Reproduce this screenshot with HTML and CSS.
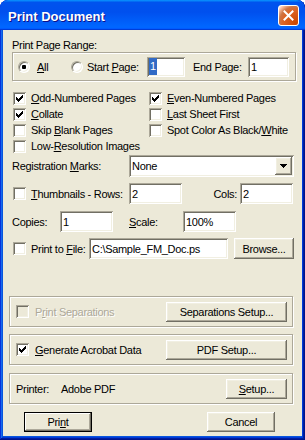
FILE: index.html
```html
<!DOCTYPE html>
<html>
<head>
<meta charset="utf-8">
<title>Print Document</title>
<link rel="stylesheet" href="styles.css">
</head>
<body>
<div class="window">
  <div class="titlebar">
    <span class="title">Print Document</span>
    <span class="close"><svg width="11" height="11" viewBox="0 0 11 11"><path d="M1.5 1.5 L9.5 9.5 M9.5 1.5 L1.5 9.5" stroke="#fff" stroke-width="2" stroke-linecap="square"/></svg></span>
  </div>
  <div class="client">
    <div class="caption">Print Page Range:</div>
    <div class="group range">
      <span class="radio on"><span class="dot"></span></span>
      <span class="lbl l-all"><u>A</u>ll</span>
      <span class="radio"></span>
      <span class="lbl l-start">Start <u>P</u>age:</span>
      <span class="field f-start"><span class="sel">1</span></span>
      <span class="lbl l-end">End Page:</span>
      <span class="field f-end">1</span>
    </div>

    <div class="checks">
      <div class="cell"><span class="cb"><svg class="tick" width="7" height="7" viewBox="0 0 7 7" shape-rendering="crispEdges"><rect x="0" y="2" width="1" height="3"/><rect x="1" y="3" width="1" height="3"/><rect x="2" y="4" width="1" height="3"/><rect x="3" y="3" width="1" height="3"/><rect x="4" y="2" width="1" height="3"/><rect x="5" y="1" width="1" height="3"/><rect x="6" y="0" width="1" height="3"/></svg></span><span class="lbl"><u>O</u>dd-Numbered Pages</span></div>
      <div class="cell"><span class="cb"><svg class="tick" width="7" height="7" viewBox="0 0 7 7" shape-rendering="crispEdges"><rect x="0" y="2" width="1" height="3"/><rect x="1" y="3" width="1" height="3"/><rect x="2" y="4" width="1" height="3"/><rect x="3" y="3" width="1" height="3"/><rect x="4" y="2" width="1" height="3"/><rect x="5" y="1" width="1" height="3"/><rect x="6" y="0" width="1" height="3"/></svg></span><span class="lbl"><u>E</u>ven-Numbered Pages</span></div>
      <div class="cell"><span class="cb"><svg class="tick" width="7" height="7" viewBox="0 0 7 7" shape-rendering="crispEdges"><rect x="0" y="2" width="1" height="3"/><rect x="1" y="3" width="1" height="3"/><rect x="2" y="4" width="1" height="3"/><rect x="3" y="3" width="1" height="3"/><rect x="4" y="2" width="1" height="3"/><rect x="5" y="1" width="1" height="3"/><rect x="6" y="0" width="1" height="3"/></svg></span><span class="lbl"><u>C</u>ollate</span></div>
      <div class="cell"><span class="cb"></span><span class="lbl"><u>L</u>ast Sheet First</span></div>
      <div class="cell"><span class="cb"></span><span class="lbl">Skip <u>B</u>lank Pages</span></div>
      <div class="cell"><span class="cb"></span><span class="lbl">Spot Color As Black/<u>W</u>hite</span></div>
      <div class="cell"><span class="cb"></span><span class="lbl">Low-<u>R</u>esolution Images</span></div>
    </div>

    <div class="row reg">
      <span class="lbl l-reg">Registration <u>M</u>arks:</span>
      <span class="combo"><span class="combo-text">None</span><span class="combo-btn"><svg width="7" height="4" viewBox="0 0 7 4" shape-rendering="crispEdges"><path d="M0 0 H7 L3.5 4 Z" fill="#000"/></svg></span></span>
    </div>

    <div class="row thumbs">
      <span class="cb"></span>
      <span class="lbl l-thumb"><u>T</u>humbnails - Rows:</span>
      <span class="field f-53">2</span>
      <span class="lbl l-cols">Cols:</span>
      <span class="field f-53">2</span>
    </div>

    <div class="row copies">
      <span class="lbl l-copies">Copies:</span>
      <span class="field f-53">1</span>
      <span class="lbl l-scale"><u>S</u>cale:</span>
      <span class="field f-53">100%</span>
    </div>

    <div class="row file">
      <span class="cb"></span>
      <span class="lbl l-file">Print to <u>F</u>ile:</span>
      <span class="field f-file">C:\Sample_FM_Doc.ps</span>
      <span class="btn b-browse">Browse...</span>
    </div>

    <div class="group lower sep">
      <span class="cb disabled"></span>
      <span class="lbl gray">P<u>r</u>int Separations</span>
      <span class="btn b-wide">Separations Setup...</span>
    </div>

    <div class="group lower gen">
      <span class="cb"><svg class="tick" width="7" height="7" viewBox="0 0 7 7" shape-rendering="crispEdges"><rect x="0" y="2" width="1" height="3"/><rect x="1" y="3" width="1" height="3"/><rect x="2" y="4" width="1" height="3"/><rect x="3" y="3" width="1" height="3"/><rect x="4" y="2" width="1" height="3"/><rect x="5" y="1" width="1" height="3"/><rect x="6" y="0" width="1" height="3"/></svg></span>
      <span class="lbl"><u>G</u>enerate Acrobat Data</span>
      <span class="btn b-wide">PDF Setup...</span>
    </div>

    <div class="group lower printer">
      <span class="lbl l-printer">Printer:</span>
      <span class="lbl">Adobe PDF</span>
      <span class="btn b-setup"><span><u>S</u>etup...</span></span>
    </div>

    <div class="actions">
      <span class="btn default b-act">Pri<u>n</u>t</span>
      <span class="btn b-act b-cancel">Cancel</span>
    </div>
  </div>
</div>
</body>
</html>
```

FILE: styles.css
```css
* { box-sizing: border-box; }

html, body {
  margin: 0;
  padding: 0;
  background: #ffffff;
}

body {
  font-family: "Liberation Sans", Arial, sans-serif;
  font-size: 11px;
  letter-spacing: -0.3px;
  color: #000;
}

u { text-decoration: underline; text-underline-offset: 1px; }

.window {
  width: 305px;
  height: 440px;
  display: flex;
  flex-direction: column;
  background: #0855dd;
  border-radius: 8px 8px 0 0;
  overflow: hidden;
  box-shadow: inset -1px -1px #00138c, inset 1px 1px #0831d9, inset -2px -2px #001ea0, inset 2px 2px #166aee, inset -3px -3px #003bda, inset 3px 3px #0855dd;
}

.titlebar {
  height: 30px;
  flex: none;
  display: flex;
  align-items: center;
  justify-content: space-between;
  padding: 0 6px 0 8px;
  background: linear-gradient(180deg, #0997ff, #0053ee 8%, #0050ee 40%, #0066ff 88%, #0066ff 93%, #005bff 95%, #003dd7 96%, #003dd7);
  border-radius: 8px 8px 0 0;
}

.title {
  color: #fff;
  font-weight: bold;
  font-size: 13px;
  letter-spacing: 0;
  margin-top: 2px;
  text-shadow: 1px 1px #0f1089;
}

.close {
  width: 21px;
  height: 21px;
  border: 1px solid #fff;
  border-radius: 3px;
  display: flex;
  align-items: center;
  justify-content: center;
  background: radial-gradient(circle at 90% 90%, #cc4600 0%, #dc6527 55%, #cd7546 70%, #ffccb2 90%, #fff 100%);
}

.client {
  flex: 1;
  margin: 0 3px 4px 3px;
  background: #ece9d8;
  display: flex;
  flex-direction: column;
}

.lbl {
  white-space: nowrap;
  flex: none;
  line-height: 16px;
}

.caption {
  margin: 9px 0 0 9px;
  height: 13px;
  line-height: 13px;
}

/* etched group */
.group {
  flex: none;
  display: flex;
  align-items: center;
  border: 1px solid #aca899;
  box-shadow: inset 1px 1px #fff, 1px 1px #fff;
}

.range {
  margin-left: 9px;
  width: 284px;
  height: 29px;
}

/* radio */
.radio {
  flex: none;
  width: 12px;
  height: 12px;
  border-radius: 50%;
  background: #fff;
  border: 1px solid;
  border-color: #aca899 #fff #fff #aca899;
  box-shadow: inset 1px 1px #716f64, inset -1px -1px #f1efe2;
  display: flex;
  align-items: center;
  justify-content: center;
}
.radio .dot { width: 4px; height: 4px; background: #000; border-radius: 1px; }
.range .radio:first-child { margin-left: 5px; }

.l-all { margin-left: 7px; width: 34px; }
.l-start { margin-left: 4px; width: 60px; }
.l-end { margin-left: 8px; width: 55px; }

/* edit field */
.field {
  flex: none;
  height: 20px;
  background: #fff;
  box-shadow: inset 1px 1px #aca899, inset -1px -1px #fff, inset 2px 2px #716f64, inset -2px -2px #f1efe2;
  padding: 0 3px;
  display: flex;
  align-items: center;
  white-space: nowrap;
  line-height: 16px;
}
.f-start { width: 38px; padding-left: 2px; }
.f-end { width: 41px; }
.f-53 { width: 53px; }
.f-file { width: 139px; }
.sel { background: #316ac5; color: #fff; padding: 0 1px; line-height: 17px; }

/* checkbox */
.cb {
  flex: none;
  width: 13px;
  height: 13px;
  background: #fff;
  box-shadow: inset 1px 1px #aca899, inset -1px -1px #fff, inset 2px 2px #716f64, inset -2px -2px #f1efe2;
  display: flex;
  align-items: center;
  justify-content: center;
}
.cb.disabled { background: #ece9d8; }
.tick { fill: #000; }

.checks {
  margin: 9px 0 0 10px;
  display: grid;
  grid-template-columns: 136px 1fr;
  grid-auto-rows: 16px;
}
.cell { display: flex; align-items: flex-start; }
.cell .cb { margin-top: 2px; }
.cell .lbl { margin-left: 5px; }

.row {
  flex: none;
  display: flex;
  align-items: center;
}

.reg { margin-top: 1px; height: 22px; padding-left: 9px; }
.l-reg { width: 117px; }
.combo {
  flex: none;
  width: 165px;
  height: 22px;
  background: #fff;
  box-shadow: inset 1px 1px #aca899, inset -1px -1px #fff, inset 2px 2px #716f64, inset -2px -2px #f1efe2;
  padding: 2px;
  display: flex;
  align-items: center;
}
.combo-text { flex: 1; padding-left: 1px; }
.combo-btn {
  flex: none;
  width: 17px;
  height: 18px;
  background: #ece9d8;
  box-shadow: inset -1px -1px #716f64, inset 1px 1px #fff, inset -2px -2px #aca899, inset 2px 2px #f1efe2;
  display: flex;
  align-items: center;
  justify-content: center;
}

.thumbs { margin-top: 6px; height: 21px; padding-left: 10px; }
.thumbs .field, .copies .field, .file .field { height: 21px; }
.l-thumb { margin-left: 5px; width: 98px; }
.l-cols { width: 58px; text-align: right; padding-right: 3px; }

.copies { margin-top: 7px; height: 21px; padding-left: 9px; }
.l-copies { width: 48px; }
.l-scale { margin-left: 16px; width: 54px; }

.file { margin-top: 6px; height: 21px; padding-left: 10px; }
.l-file { margin-left: 5px; width: 58px; }

/* buttons */
.btn {
  flex: none;
  height: 20px;
  display: flex;
  align-items: center;
  justify-content: center;
  background: #ece9d8;
  white-space: nowrap;
  box-shadow: inset -1px -1px #716f64, inset 1px 1px #fff, inset -2px -2px #aca899, inset 2px 2px #f1efe2;
}
.btn.default {
  border: 1px solid #000;
  box-shadow: inset -1px -1px #716f64, inset 1px 1px #fff, inset -2px -2px #aca899;
}
.b-browse { margin-left: 6px; width: 60px; height: 21px; }
.b-wide { margin-left: auto; margin-right: 5px; width: 121px; }
.b-setup { margin-left: auto; margin-right: 5px; width: 61px; }

.lower {
  margin-left: 6px;
  width: 284px;
  height: 31px;
}
.sep { margin-top: 37px; }
.gen { margin-top: 7px; }
.printer { margin-top: 8px; }
.lower > .cb { margin-left: 6px; }
.lower > .cb + .lbl { margin-left: 6px; }
.l-printer { margin-left: 6px; width: 45px; }

.gray { color: #aca899; text-shadow: 1px 1px #fff; }

.actions {
  margin-top: 8px;
  padding-left: 21px;
  display: flex;
}
.b-act { width: 68px; }
.b-cancel { margin-left: 115px; }
```
